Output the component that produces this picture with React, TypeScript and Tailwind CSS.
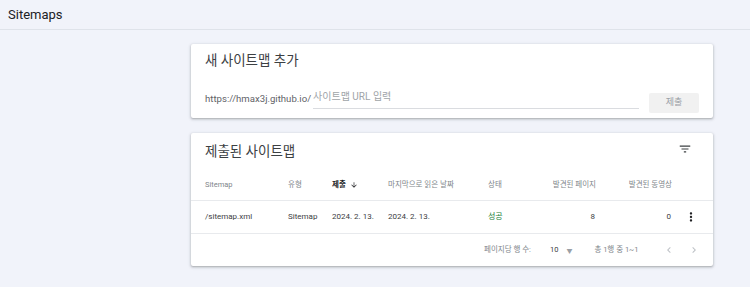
import React from "react";

const font = { fontFamily: 'Roboto, "Noto Sans CJK KR", sans-serif' };

function FilterIcon() {
  return (
    <svg width="14" height="14" viewBox="0 0 24 24" fill="#3c4043">
      <path d="M10 18h4v-2h-4v2zM3 6v2h18V6H3zm3 7h12v-2H6v2z" />
    </svg>
  );
}

function MoreIcon() {
  return (
    <svg width="14" height="14" viewBox="0 0 24 24" fill="#202124">
      <path d="M12 8c1.1 0 2-.9 2-2s-.9-2-2-2-2 .9-2 2 .9 2 2 2zm0 2c-1.1 0-2 .9-2 2s.9 2 2 2 2-.9 2-2-.9-2-2-2zm0 6c-1.1 0-2 .9-2 2s.9 2 2 2 2-.9 2-2-.9-2-2-2z" />
    </svg>
  );
}

function Chevron({ dir }: { dir: "l" | "r" }) {
  return (
    <svg width="12" height="12" viewBox="0 0 24 24" fill="#bdc1c6">
      {dir === "l" ? (
        <path d="M15.41 7.41 14 6l-6 6 6 6 1.41-1.41L10.83 12z" />
      ) : (
        <path d="M10 6 8.59 7.41 13.17 12l-4.58 4.59L10 18l6-6z" />
      )}
    </svg>
  );
}

export default function App() {
  return (
    <div className="w-[750px] h-[287px] bg-[#f1f3fa] overflow-hidden" style={font}>
      <div className="h-[30px] border-b border-[#dfe3ea] flex items-center pl-[8px]">
        <span className="text-[13px] text-[#202124]">Sitemaps</span>
      </div>

      <div className="ml-[191px] w-[522px] mt-[14px] flex flex-col gap-[15px]">
        {/* Card 1 */}
        <div className="bg-white rounded-[2px] shadow-[0_1px_2px_rgba(60,64,67,0.3),0_1px_3px_1px_rgba(60,64,67,0.12)] h-[74px] px-[14px] pt-[8px]">
          <div className="text-[13.5px] leading-[16px] text-[#3c4043]">새 사이트맵 추가</div>
          <div className="flex items-end mt-[15px]">
            <span className="text-[9.6px] text-[#5f6368] leading-[14px] pb-[3px]">https://hmax3j.github.io/</span>
            <div className="ml-[2px] w-[326px] border-b border-[#dadce0] pb-[1px]">
              <span className="text-[10px] text-[#a0a4a8] leading-[14px]">사이트맵 URL 입력</span>
            </div>
            <div className="ml-[10px] w-[50px] h-[20px] bg-[#f1f1f1] rounded-[2px] flex items-center justify-center text-[9px] text-[#9aa0a6] mb-[-4px]">
              제출
            </div>
          </div>
        </div>

        {/* Card 2 */}
        <div className="bg-white rounded-[2px] shadow-[0_1px_2px_rgba(60,64,67,0.3),0_1px_3px_1px_rgba(60,64,67,0.12)] h-[133px] flex flex-col">
          <div className="flex items-center justify-between pl-[14px] pr-[21px] pt-[9px] h-[26px]">
            <span className="text-[13.5px] leading-[16px] text-[#3c4043]">제출된 사이트맵</span>
            <span className="mt-[-4px]"><FilterIcon /></span>
          </div>
          <div className="h-[42px] border-b border-[#e8eaed] pl-[14px] grid grid-cols-[83px_44px_56px_100px_50px_58px_76px_1fr] items-center text-[7.5px] text-[#80868b] pt-[10px]">
            <span>Sitemap</span>
            <span>유형</span>
            <span className="font-bold text-[#202124] flex items-center gap-[4px]">
              제출
              <svg width="8" height="8" viewBox="0 0 24 24" fill="#202124">
                <path d="M20 12l-1.41-1.41L13 16.17V4h-2v12.17l-5.58-5.59L4 12l8 8 8-8z" />
              </svg>
            </span>
            <span>마지막으로 읽은 날짜</span>
            <span>상태</span>
            <span className="text-right">발견된 페이지</span>
            <span className="text-right">발견된 동영상</span>
            <span></span>
          </div>
          <div className="h-[33px] border-b border-[#e8eaed] pl-[14px] grid grid-cols-[83px_44px_56px_100px_50px_58px_76px_1fr] items-center text-[8px] text-[#3c4043]">
            <span>/sitemap.xml</span>
            <span>Sitemap</span>
            <span>2024. 2. 13.</span>
            <span>2024. 2. 13.</span>
            <span className="text-[#188038]">성공</span>
            <span className="text-right pr-[1px]">8</span>
            <span className="text-right pr-[1px]">0</span>
            <span className="flex justify-end pr-[15px]"><MoreIcon /></span>
          </div>
          <div className="flex-1 flex items-center text-[7.5px] text-[#80868b] pl-[293px]">
            <span>페이지당 행 수:</span>
            <span className="ml-[19px] text-[#3c4043]">10</span>
            <span className="ml-[8px] text-[6px] text-[#9aa0a6]">▼</span>
            <span className="ml-[22px]">총 1행 중 1~1</span>
            <span className="ml-[25px]"><Chevron dir="l" /></span>
            <span className="ml-[13px]"><Chevron dir="r" /></span>
          </div>
        </div>
      </div>
    </div>
  );
}
